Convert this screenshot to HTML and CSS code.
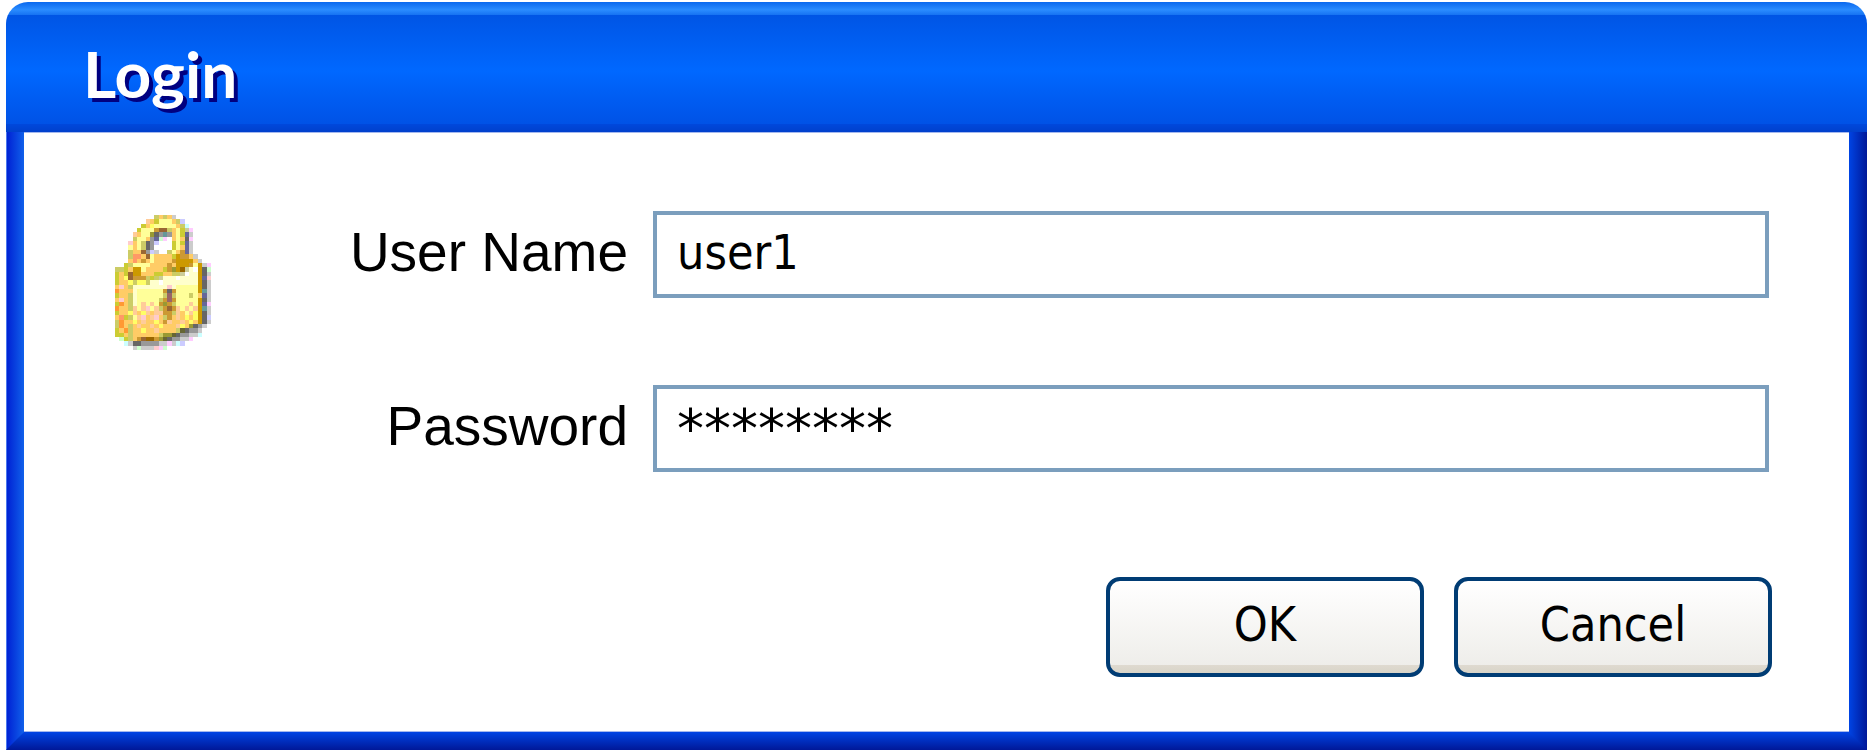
FILE: index.html
```html
<!DOCTYPE html>
<html lang="en">
<head>
<meta charset="utf-8">
<title>Login</title>
<link rel="stylesheet" href="styles.css">
</head>
<body>
<main class="window">
  <header class="titlebar"><h1 class="title">Login</h1></header>
  <div class="frame">
    <div class="edge edge-bottom"></div>
    <div class="edge edge-left"></div>
    <div class="edge edge-right"></div>
    <form class="content">
      <svg class="lock" viewBox="0 0 22 31" shape-rendering="crispEdges" role="img" aria-label="Padlock"></svg>
      <div class="fields">
        <div class="field">
          <label for="user">User Name</label>
          <input id="user" type="text" value="user1">
        </div>
        <div class="field">
          <label for="pass">Password</label>
          <input id="pass" class="secret" type="text" autocomplete="off" value="********">
        </div>
      </div>
      <div class="actions">
        <button type="button">OK</button>
        <button type="button">Cancel</button>
      </div>
    </form>
  </div>
</main>
<script src="lock.js"></script>
</body>
</html>
```
FILE: styles.css
```css
* { box-sizing: border-box; }
body { margin: 0; background: #fff; color: #000; }
.window { margin: 2px 6px 3px; }
.titlebar {
  padding: 35px 77px 21px;
  border-radius: 22px 22px 0 0;
  background:
    linear-gradient(#0a68ee, #2a8cff 60%, #1672f2) top / 100% 13px no-repeat,
    linear-gradient(#0048dc, #0040cc) bottom / 100% 8px no-repeat,
    linear-gradient(#0055e5 10%, #0068ff 53%, #0052e6 94%);
}
.title {
  margin: 0;
  font: bold 64px/74px Lato, sans-serif;
  color: #fff;
  text-shadow: 4px 4px 0 #000080;
}
.frame {
  display: grid;
  grid-template-columns: 18px 1fr 18px;
  grid-template-rows: auto 18px;
}
.edge-left {
  grid-area: 1 / 1 / 3 / 2;
  background: linear-gradient(90deg, #0022d4, #1060ea);
  border-left: 1px solid #4a78ee;
  clip-path: polygon(0 0, 100% 0, 100% calc(100% - 18px), 0 100%);
}
.edge-right {
  grid-area: 1 / 3 / 3 / 4;
  background: linear-gradient(90deg, #0044e4, #001898);
  clip-path: polygon(0 0, 100% 0, 100% 100%, 0 calc(100% - 18px));
}
.edge-bottom {
  grid-area: 2 / 1 / 3 / 4;
  background: linear-gradient(#0044e4, #001898);
}
.content {
  grid-area: 1 / 2 / 2 / 3;
  display: grid;
  grid-template-columns: 96px 1fr;
  column-gap: 24px;
  padding: 78px 80px 54px 91px;
  border: solid #a4b8ee;
  border-width: 1px 0;
}
.lock { width: 96px; height: 135px; margin-top: 4px; }
.fields { display: grid; gap: 87px; }
.field {
  display: grid;
  grid-template-columns: 393px 1fr;
  column-gap: 25px;
  align-items: center;
}
label {
  padding-bottom: 6px;
  text-align: right;
  font: 55px/64px "Liberation Sans", Arial, sans-serif;
}
input {
  width: 100%;
  height: 87px;
  margin: 0;
  padding: 0 22px 5px 20px;
  border: 4px solid #7b9ebd;
  border-radius: 0;
  background: #fff;
  color: #000;
  font: 48px/60px "DejaVu Sans Condensed", "DejaVu Sans", sans-serif;
}
.secret {
  padding-bottom: 0;
  font: 54px/64px "DejaVu Sans", sans-serif;
}
.actions {
  grid-column: 1 / 3;
  display: flex;
  justify-content: flex-end;
  gap: 30px;
  margin: 105px -3px 0 0;
}
button {
  width: 318px;
  height: 100px;
  padding: 0 0 6px;
  border: 4px solid #003c74;
  border-radius: 14px;
  background:
    linear-gradient(#dfdad0, #d8d4c8) bottom / 100% 8px no-repeat,
    linear-gradient(#fff, #edece8);
  color: #000;
  font: 48px/60px "DejaVu Sans Condensed", "DejaVu Sans", sans-serif;
}
```
FILE: lock.js
```js
// Padlock icon: one character per cell, looked up in the palette.
const palette = {
  o: "#ffcc66", y: "#ffff99", z: "#ffff66", l: "#ffffcc", Y: "#cccc33", k: "#cccc66",
  g: "#cccccc", m: "#999999", D: "#666666", b: "#996633", B: "#cc9933", G: "#cc9900",
  d: "#996600", x: "#666633", e: "#999933", p: "#ffcccc", P: "#ffccff", v: "#ccccff",
  c: "#ccffff", n: "#ccffcc", r: "#ff9966", R: "#ff9933", s: "#ffcc99", q: "#cccc99",
  t: "#669999", u: "#666699", h: "#996666", w: "#ffffff"
};
const rows = [
  ".........kokog........",
  ".......soYyyyokv......",
  "......Yozyyyyyokc.....",
  ".....YyyyBbbkoyYqP....",
  "....soyyeDmtmoyYug....",
  "....kyyomunPwoyoDP....",
  "...poykDmv.wwYyYug....",
  "...yoykDm.wwwYyoug....",
  "...koobmvgwwkyoBug....",
  "...krrobyooooYGBBog...",
  "...oroBoyooooBGGGGog..",
  "..YkyyyyooooBoGGGByGgP",
  "kkYoGGyooooYBeGdqlwGDn",
  "YoYbGGoooYYookkqwllGDg",
  "YozbBBBkYkqlllwllllGup",
  "YoozkzzkllwllllllllGDg",
  "opokllllllllplyyyyyGDg",
  "RooolyyyyyyBDByyyyyGtg",
  "Yooklyyyyyykhkyyykyoug",
  "opoklyyyyykBhByyyyyGDg",
  "YRoklysysyBeBkyyysyGuP",
  "RooksyspyskBbBsysysGtg",
  "YoozsozsossBBksoyszGDg",
  "orYkyspospokBosozozGDv",
  "kRoozosoozoBsoosozoGDg",
  "kRokosoosozoooszoeDmg.",
  "YoRkoozoosooookxDmmg..",
  "YYokooooookeexDmmggc..",
  ".nYkoBbddBexDmmggP....",
  "..cgDDmmmmggPgcv......",
  "....gngggpPn.........."
];
const svg = document.querySelector(".lock");
rows.forEach((row, y) => {
  [...row].forEach((cell, x) => {
    if (!palette[cell]) return;
    const r = document.createElementNS("http://www.w3.org/2000/svg", "rect");
    r.setAttribute("x", x);
    r.setAttribute("y", y);
    r.setAttribute("width", 1);
    r.setAttribute("height", 1);
    r.setAttribute("fill", palette[cell]);
    svg.append(r);
  });
});
```
